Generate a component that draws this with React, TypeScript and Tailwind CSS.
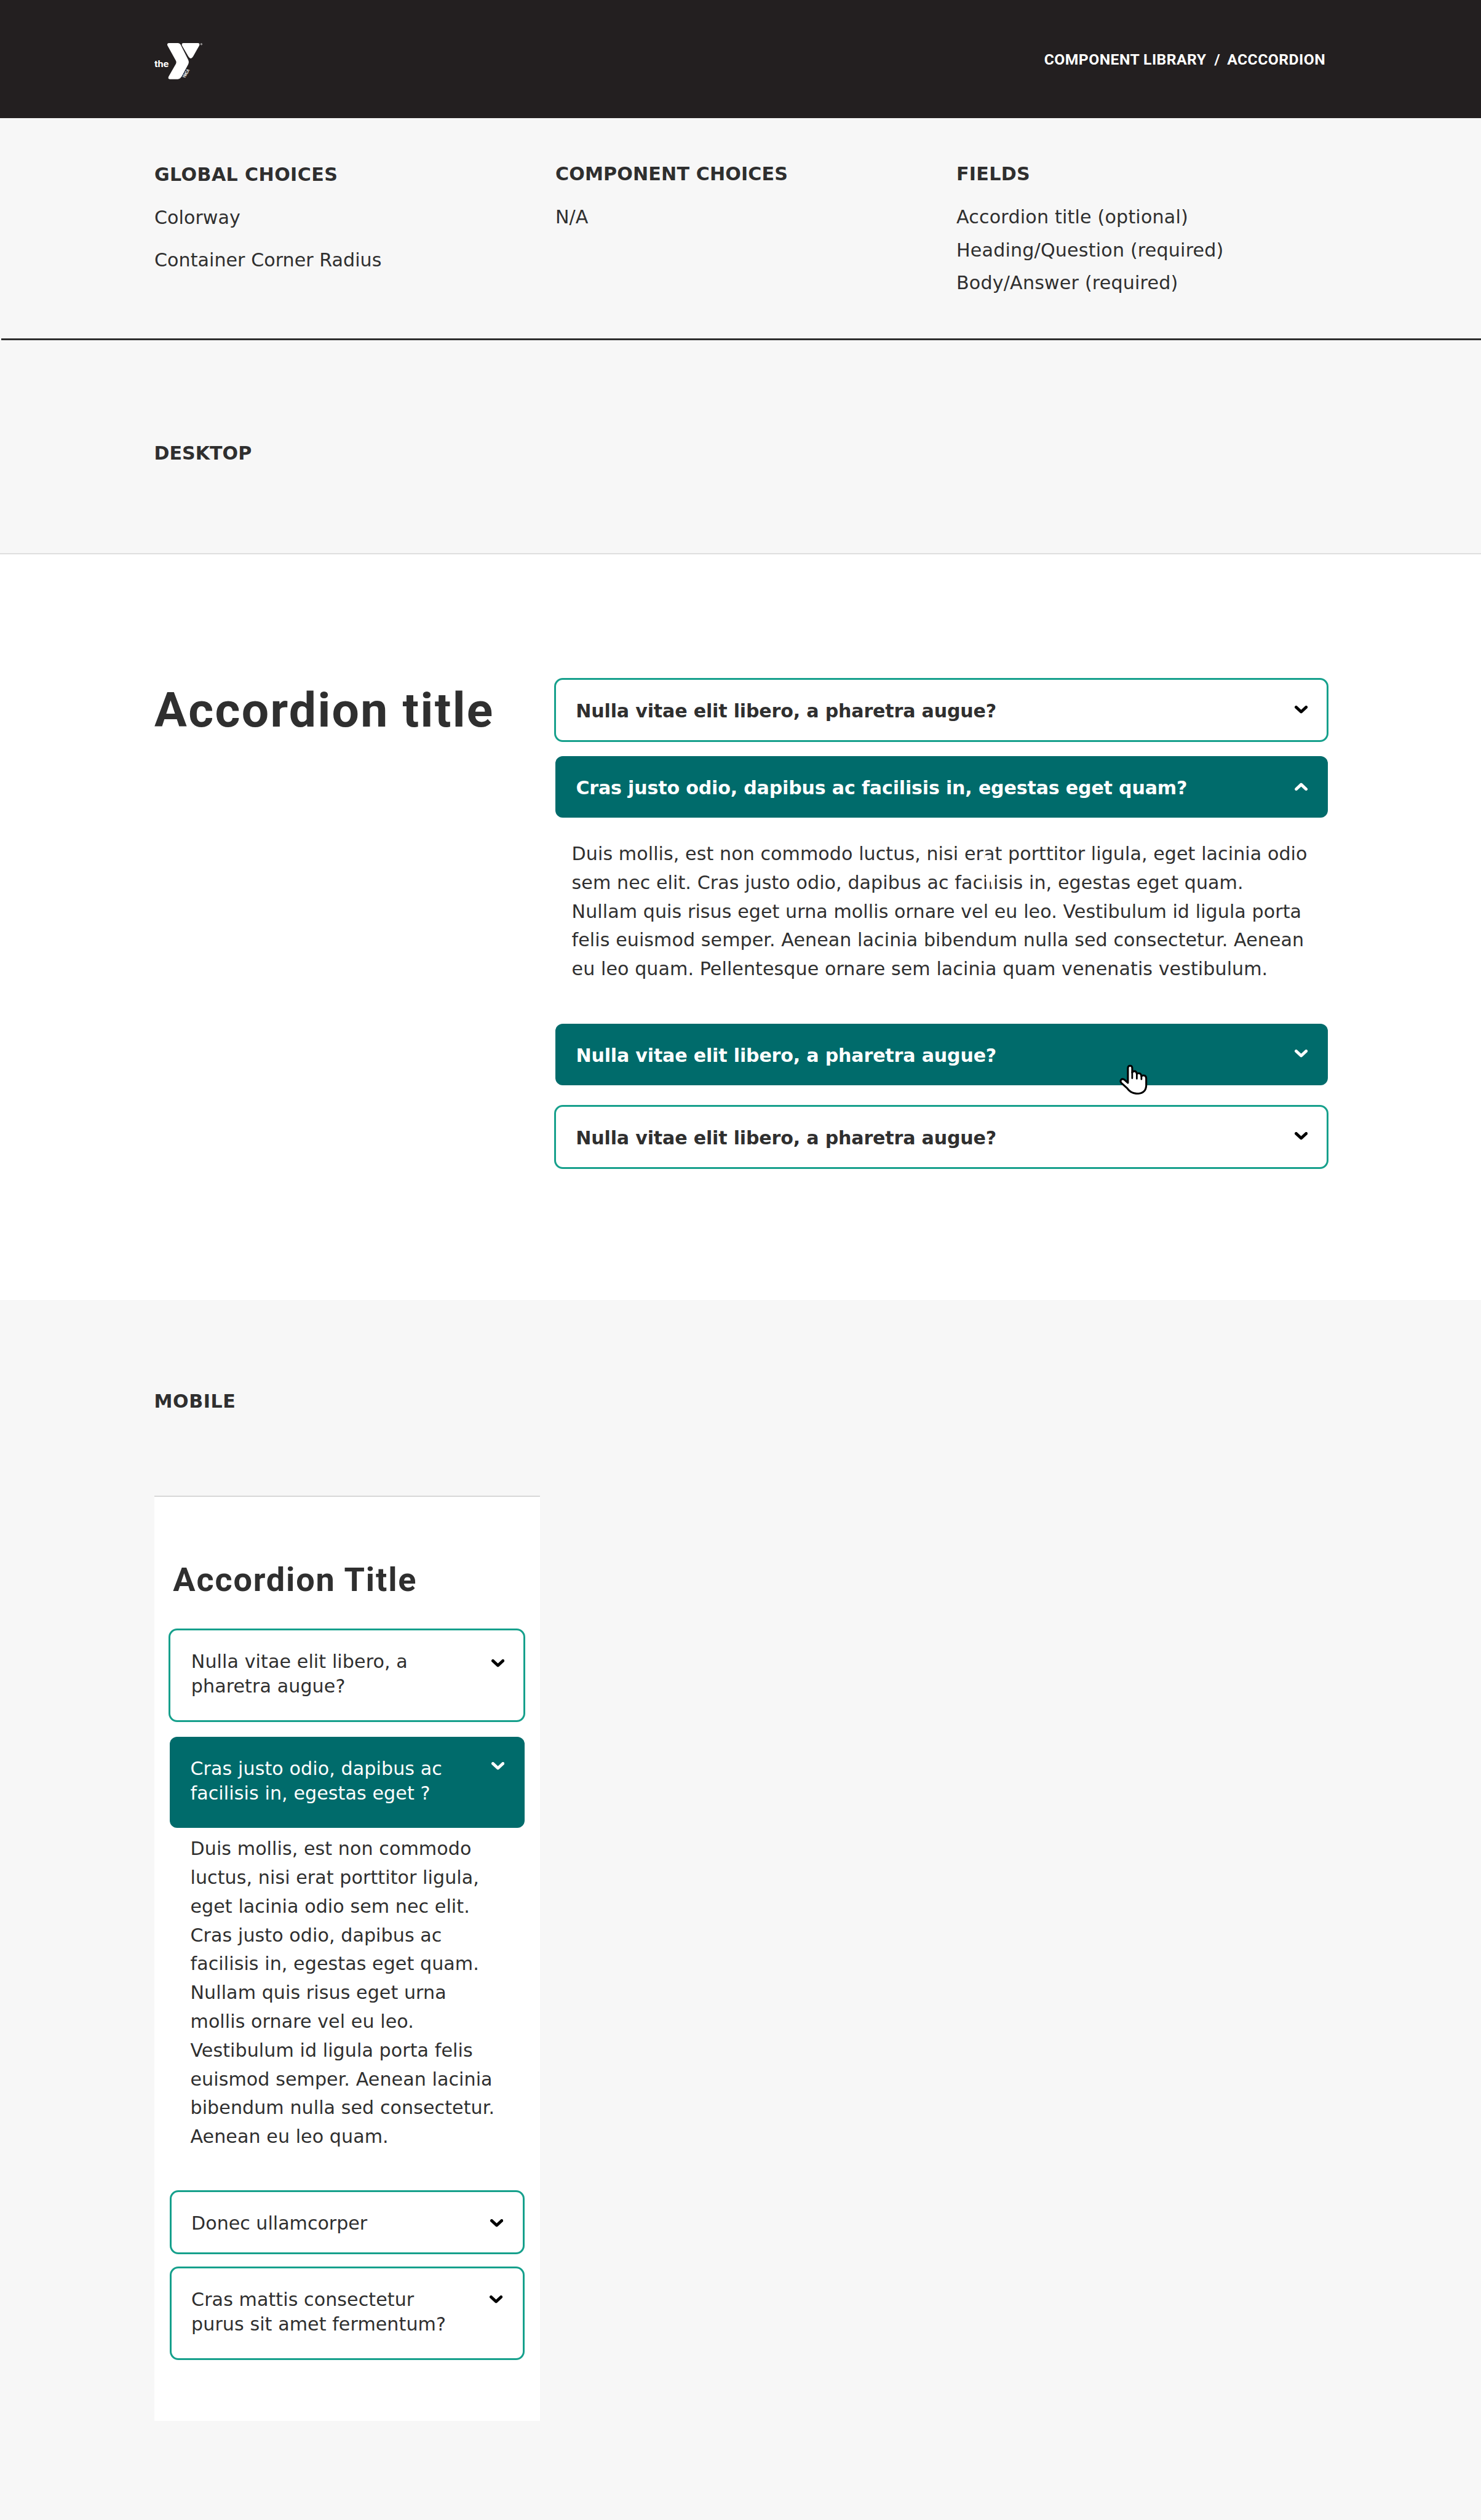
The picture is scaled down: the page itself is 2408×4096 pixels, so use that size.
import type { ReactNode } from "react";
import clsx from "clsx";

function YLogo() {
  return (
    <svg viewBox="60 68 284 217" className="h-[60.5px] w-[79.2px]" fill="#fff" aria-label="the Y">
      <path d="M146 72H198Q208 72 213 81L257 168Q264 182 257 196L222 262Q211 282 196 282H150Q137 281 143 267L186 192Q190 184 186 176L136 85Q132 73 146 72Z" />
      <path d="M229 72H313Q327 73 322 86L286 150Q272 173 258 150L221 86Q217 73 229 72Z" />
      <text x="60" y="212" fontFamily="Roboto" fontWeight="700" fontSize="51" textLength="84" lengthAdjust="spacingAndGlyphs">
        the
      </text>
      <text
        transform="translate(238 278) rotate(-60)"
        fontFamily="Roboto"
        fontWeight="700"
        fontSize="25"
        textLength="56"
        lengthAdjust="spacingAndGlyphs"
      >
        YMCA
      </text>
      <circle cx="334" cy="78" r="4.5" fill="none" stroke="#fff" strokeWidth="2" />
      <circle cx="334" cy="78" r="2" />
    </svg>
  );
}

function Chevron({ up = false, className }: { up?: boolean; className?: string }) {
  return (
    <svg viewBox="0 0 25.4 15.8" className={clsx("h-[13.2px] w-[21.2px] shrink-0", up && "rotate-180", className)}>
      <path d="M3 3 12.7 12 22.4 3" fill="none" stroke="currentColor" strokeWidth="5.9" strokeLinecap="round" strokeLinejoin="round" />
    </svg>
  );
}

function HandCursor() {
  return (
    <svg viewBox="53 58 166 178" className="absolute top-[66px] left-[917.5px] h-[49.5px] w-[46.2px]">
      <path
        d="M103 166V78Q104 66 115.500 66Q127 66 128 78V106Q131 98 141 98Q153 98 155 114Q159 109 168 110Q180 111 182 127Q187 122 196 123Q209 124 210 139V183Q207 229 155 229Q119 228 98 197L64 166Q56 155 64 147Q72 140 84 149Z"
        fill="#fff"
        stroke="#000"
        strokeWidth="11"
        strokeLinejoin="round"
      />
      <path d="M128 104V139M155 112V142M182 125V145" fill="none" stroke="#000" strokeWidth="10" strokeLinecap="round" />
    </svg>
  );
}

type ItemProps = {
  children: ReactNode;
  filled?: boolean;
  up?: boolean;
  className?: string;
  chevron: string;
};

function Item({ children, filled = false, up, className, chevron }: ItemProps) {
  return (
    <button
      type="button"
      className={clsx(
        "relative flex items-start justify-between text-left leading-[40.1px] whitespace-nowrap",
        filled ? "rounded-[12px] bg-[#006b6b] text-white" : "rounded-[14px] border-[3px] border-[#16a08c] bg-white",
        className,
      )}
    >
      <span>{children}</span>
      <Chevron up={up} className={clsx(!filled && "text-black", chevron)} />
    </button>
  );
}

function Lines({ lines }: { lines: string[] }) {
  return (
    <>
      {lines.map((line) => (
        <span key={line} className="block whitespace-nowrap">
          {line}
        </span>
      ))}
    </>
  );
}

const desktopBody = [
  "Duis mollis, est non commodo luctus, nisi erat porttitor ligula, eget lacinia odio",
  "sem nec elit. Cras justo odio, dapibus ac facilisis in, egestas eget quam.",
  "Nullam quis risus eget urna mollis ornare vel eu leo. Vestibulum id ligula porta",
  "felis euismod semper. Aenean lacinia bibendum nulla sed consectetur. Aenean",
  "eu leo quam. Pellentesque ornare sem lacinia quam venenatis vestibulum.",
];

const mobileBody = [
  "Duis mollis, est non commodo",
  "luctus, nisi erat porttitor ligula,",
  "eget lacinia odio sem nec elit.",
  "Cras justo odio, dapibus ac",
  "facilisis in, egestas eget quam.",
  "Nullam quis risus eget urna",
  "mollis ornare vel eu leo.",
  "Vestibulum id ligula porta felis",
  "euismod semper. Aenean lacinia",
  "bibendum nulla sed consectetur.",
  "Aenean eu leo quam.",
];

export default function App() {
  return (
    <div className="flex h-[4096px] w-[2408px] flex-col overflow-hidden bg-[#f7f7f7] font-['DejaVu_Sans',Verdana,sans-serif] text-[30.1px] text-[#2f2f2f]">
      <header className="flex h-[192.300px] shrink-0 items-start justify-between bg-[#231f20] pr-[253px] pl-[250.800px]">
        <div className="pt-[69px]">
          <YLogo />
        </div>
        <nav className="flex pt-[82px] font-['Roboto',sans-serif] text-[24.7px] leading-[30px] font-bold tracking-[0.45px] whitespace-nowrap text-white">
          <span>COMPONENT LIBRARY</span>
          <span className="mr-[11px] ml-[13px]">/</span>
          <span>ACCCORDION</span>
        </nav>
      </header>

      <section className="flex h-[357.900px] shrink-0 pl-[251px] leading-[40px] whitespace-nowrap">
        <div className="w-[652px] pt-[72px]">
          <h2 className="font-bold tracking-[0.4px]">GLOBAL CHOICES</h2>
          <p className="mt-[30.200px] tracking-[0.05px]">Colorway</p>
          <p className="mt-[28.600px] tracking-[0.05px]">Container Corner Radius</p>
        </div>
        <div className="w-[652px] pt-[70.400px]">
          <h2 className="font-bold tracking-[0.15px]">COMPONENT CHOICES</h2>
          <p className="mt-[30.300px]">N/A</p>
        </div>
        <div className="pt-[70.400px]">
          <h2 className="font-bold tracking-[0.3px]">FIELDS</h2>
          <div className="mt-[23.500px] leading-[53.500px] tracking-[0.2px]">
            <p>Accordion title (optional)</p>
            <p>Heading/Question (required)</p>
            <p>Body/Answer (required)</p>
          </div>
        </div>
      </section>
      <div className="ml-[2px] h-[3.300px] shrink-0 bg-[#2f2f2f]" />

      <section className="h-[346px] shrink-0 pt-[164px] pl-[250.500px] leading-[40px]">
        <h2 className="font-bold">DESKTOP</h2>
      </section>

      <section className="flex h-[1213.500px] shrink-0 items-start border-t-2 border-[#dedede] bg-white pl-[251px]">
        <h1 className="w-[650.300px] pt-[207.200px] font-['Roboto',sans-serif] text-[78.600px] leading-[90px] font-bold tracking-[2.350px] whitespace-nowrap">
          Accordion title
        </h1>
        <div className="flex w-[1259.200px] flex-col pt-[200.500px]">
          <Item className="h-[103.700px] pt-[31px] pr-[31.300px] pl-[32px] font-bold tracking-[-0.18px]" chevron="mt-[11.500px]">
            Nulla vitae elit libero, a pharetra augue?
          </Item>
          <Item filled up className="mx-[1.700px] mt-[23.300px] h-[100.400px] pt-[32px] pr-[32.600px] pl-[33.400px] font-bold tracking-[-0.18px]" chevron="mt-[11.500px]">
            Cras justo odio, dapibus ac facilisis in, egestas eget quam?
          </Item>
          <div className="relative mt-[35.400px] ml-[28.300px] h-[299.100px] leading-[46.900px] tracking-[0.080px]">
            <Lines lines={desktopBody} />
            <svg viewBox="0 0 40 80" className="absolute top-[12px] left-[662px] h-[80px] w-[40px]" fill="#fff">
              <path d="M9 13H20V18Q12 19 10 24H20Q24 27 21 33L14 36H9Z" />
              <path d="M11 44H24V64H19V56H11Z" />
            </svg>
          </div>
          <Item filled className="mx-[1.700px] h-[100.400px] pt-[32px] pr-[32.600px] pl-[33.400px] font-bold tracking-[-0.18px]" chevron="mt-[9.800px]">
            Nulla vitae elit libero, a pharetra augue?
            <HandCursor />
          </Item>
          <Item className="mt-[31.700px] h-[103.700px] pt-[31px] pr-[31.300px] pl-[32px] font-bold tracking-[-0.18px]" chevron="mt-[9.600px]">
            Nulla vitae elit libero, a pharetra augue?
          </Item>
        </div>
      </section>

      <section className="shrink-0 pt-[145px] pl-[250px]">
        <h2 className="ml-[0.500px] leading-[40px] font-bold tracking-[0.600px]">MOBILE</h2>
        <div className="mt-[133.400px] ml-[0.800px] flex h-[1503.300px] w-[627.100px] flex-col border-t-2 border-[#d8d8d8] bg-white">
          <h2 className="mt-[104.600px] ml-[30.500px] font-['Roboto',sans-serif] text-[54px] leading-[60px] font-bold tracking-[1.850px]">Accordion Title</h2>
          <Item className="mt-[49px] ml-[23.400px] h-[152.200px] w-[580.300px] pt-[31px] pr-[31.300px] pl-[33.600px] tracking-[0.100px]" chevron="mt-[16.400px]">
            <Lines lines={["Nulla vitae elit libero, a", "pharetra augue?"]} />
          </Item>
          <Item filled className="mt-[23.400px] ml-[25.100px] h-[148.800px] w-[576.900px] pt-[32.400px] pr-[32.600px] pl-[33.600px] tracking-[0.100px]" chevron="mt-[9.400px]">
            <Lines lines={["Cras justo odio, dapibus ac", "facilisis in, egestas eget ?"]} />
          </Item>
          <div className="mt-[10.800px] ml-[58.700px] h-[577.900px] leading-[46.820px] tracking-[0.080px]">
            <Lines lines={mobileBody} />
          </div>
          <Item className="ml-[25.100px] h-[103.700px] w-[576.900px] pt-[30.500px] pr-[31.300px] pl-[32.200px]" chevron="mt-[13.600px]">
            Donec ullamcorper
          </Item>
          <Item className="mt-[20px] ml-[25.100px] h-[152.200px] w-[576.900px] pt-[31px] pr-[33px] pl-[32.200px] tracking-[0.080px]" chevron="mt-[13.200px]">
            <Lines lines={["Cras mattis consectetur", "purus sit amet fermentum?"]} />
          </Item>
        </div>
      </section>
    </div>
  );
}
